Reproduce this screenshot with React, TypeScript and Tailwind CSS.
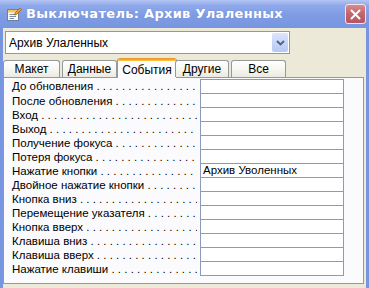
const EVENTS = [
  { label: "До обновления", value: "" },
  { label: "После обновления", value: "" },
  { label: "Вход", value: "" },
  { label: "Выход", value: "" },
  { label: "Получение фокуса", value: "" },
  { label: "Потеря фокуса", value: "" },
  { label: "Нажатие кнопки", value: "Архив Уволенных" },
  { label: "Двойное нажатие кнопки", value: "" },
  { label: "Кнопка вниз", value: "" },
  { label: "Перемещение указателя", value: "" },
  { label: "Кнопка вверх", value: "" },
  { label: "Клавиша вниз", value: "" },
  { label: "Клавиша вверх", value: "" },
  { label: "Нажатие клавиши", value: "" },
];

const TABS = [
  { name: "Макет", w: "w-[57px]" },
  { name: "Данные", w: "w-[55px]" },
  { name: "События", w: "w-[60px]", active: true },
  { name: "Другие", w: "w-[54px]" },
  { name: "Все", w: "w-[55px]" },
];

const DOTS = " .".repeat(40);

function PropsIcon() {
  return (
    <svg width="16" height="16" viewBox="0 0 16 16">
      <rect x="1.5" y="3.5" width="11" height="11" fill="#fdfdf6" stroke="#6f7f9f" />
      <rect x="2" y="4" width="10" height="2.5" fill="#f3c55a" />
      <line x1="3.5" y1="8.5" x2="10" y2="8.5" stroke="#7c8aa8" />
      <line x1="3.5" y1="10.5" x2="10" y2="10.5" stroke="#7c8aa8" />
      <line x1="3.5" y1="12.5" x2="8" y2="12.5" stroke="#7c8aa8" />
      <path d="M9 7 L14 2 L15.5 3.5 L10.5 8.5 L8.5 9 Z" fill="#f0a030" stroke="#8a5a20" strokeWidth="0.7" />
    </svg>
  );
}

function TitleBar() {
  return (
    <div className="h-[28px] shrink-0 flex items-center bg-[linear-gradient(180deg,#b3c5f2_0%,#8ea9ea_20%,#7e9be3_55%,#7896e0_100%)] pl-[6px] pr-[3px]">
      <PropsIcon />
      <span className="ml-[4px] text-white font-bold text-[13px] tracking-[0.3px] font-['DejaVu_Sans',sans-serif] [text-shadow:0_0_1px_#6f88c8]">
        Выключатель: Архив Улаленных
      </span>
      <div className="ml-auto w-[21px] h-[20px] rounded-[3px] border border-[#f2e6ea] bg-[linear-gradient(180deg,#d88a90_0%,#c4636c_50%,#b8555f_100%)] flex items-center justify-center">
        <svg width="11" height="11" viewBox="0 0 11 11">
          <path d="M1.5 1.5 L9.5 9.5 M9.5 1.5 L1.5 9.5" stroke="#fff" strokeWidth="2" strokeLinecap="round" />
        </svg>
      </div>
    </div>
  );
}

export default function App() {
  return (
    <div className="w-[369px] h-[288px] overflow-hidden bg-[#ece9d8] flex flex-col font-['Liberation_Sans',Arial,sans-serif] text-[11px] text-black">
      <TitleBar />
      <div className="flex-1 flex flex-col border-x-[3px] border-[#7896e0] min-h-0">
        {/* object selector */}
        <div className="mt-[3px] ml-[2px] w-[285px] h-[23px] bg-white border border-[#7f9db9] flex items-center">
          <span className="pl-[3px] text-[12px]">Архив Улаленных</span>
          <div className="ml-auto mr-[1px] w-[16px] h-[19px] rounded-[2px] bg-[linear-gradient(180deg,#dbe5fb_0%,#c4d4f7_60%,#b6c8f3_100%)] flex items-center justify-center">
            <svg width="9" height="6" viewBox="0 0 9 6">
              <path d="M1 1 L4.5 4.5 L8 1" stroke="#4d6185" strokeWidth="1.8" fill="none" />
            </svg>
          </div>
        </div>

        {/* tabs */}
        <div className="mt-[4px] h-[19px] flex items-end relative z-10">
          {TABS.map((t) =>
            t.active ? (
              <div
                key={t.name}
                className={`${t.w} h-[20px] -mb-px -mx-[2px] flex flex-col bg-[#fcfcfe] border-x border-[#919b9c] rounded-t-[3px] overflow-hidden`}
              >
                <div className="h-[3px] bg-[linear-gradient(180deg,#e68b2c,#ffc73c)] shrink-0" />
                <div className="flex-1 flex items-center justify-center text-[12px] pb-[1px]">{t.name}</div>
              </div>
            ) : (
              <div
                key={t.name}
                className={`${t.w} h-[17px] mr-[2px] flex items-center justify-center text-[12px] border border-b-0 border-[#919b9c] rounded-t-[3px] bg-[linear-gradient(180deg,#ffffff_0%,#f7f7f3_50%,#ebeae0_100%)]`}
              >
                {t.name}
              </div>
            )
          )}
        </div>

        {/* panel */}
        <div className="w-[361px] flex-1 border border-[#919b9c] bg-[#fbfbfd] pt-[1px] min-h-0">
          {EVENTS.map((e) => (
            <div key={e.label} className="flex h-[14px] first:h-[15px] group">
              <div className="w-[196px] flex items-center pl-[8px] pr-[3px] whitespace-nowrap text-[11.5px] leading-[13px]">
                <span>{e.label}</span>
                <span className="flex-1 overflow-hidden whitespace-pre">{DOTS}</span>
              </div>
              <div className="w-[144px] border-x border-b group-first:border-t border-[#8a9ab9] bg-white flex items-center pl-[2px] text-[11.5px] leading-[13px]">
                {e.value}
              </div>
            </div>
          ))}
        </div>
        <div className="h-[4px] shrink-0" />
      </div>
    </div>
  );
}
